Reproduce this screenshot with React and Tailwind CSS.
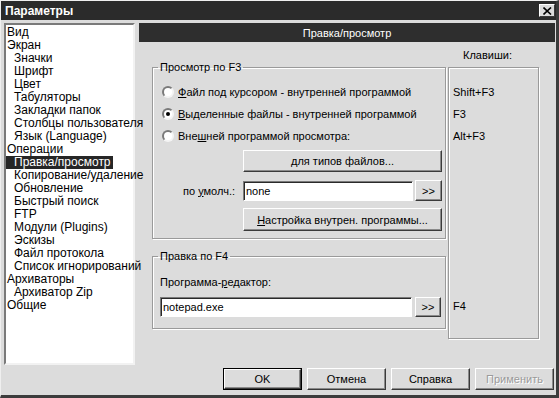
import React from "react";

const items = [
  ["Вид", 0], ["Экран", 0], ["Значки", 1], ["Шрифт", 1], ["Цвет", 1], ["Табуляторы", 1],
  ["Закладки папок", 1], ["Столбцы пользователя", 1], ["Язык (Language)", 1], ["Операции", 0],
  ["Правка/просмотр", 1, true], ["Копирование/удаление", 1], ["Обновление", 1], ["Быстрый поиск", 1],
  ["FTP", 1], ["Модули (Plugins)", 1], ["Эскизы", 1], ["Файл протокола", 1],
  ["Список игнорирований", 1], ["Архиваторы", 0], ["Архиватор Zip", 1], ["Общие", 0],
];

function Radio({ checked }) {
  return (
    <span className="w-[12px] h-[12px] rounded-full bg-white border-2 border-t-[#7a7a7a] border-l-[#7a7a7a] border-r-[#f4f4f4] border-b-[#f4f4f4] flex items-center justify-center shrink-0">
      {checked && <span className="w-[4px] h-[4px] rounded-full bg-black" />}
    </span>
  );
}

function Btn({ children, className }) {
  return (
    <div className={"flex items-center justify-center bg-[#dcdcdc] border border-t-white border-l-white border-r-[#3a3a3a] border-b-[#3a3a3a] shadow-[inset_-1px_-1px_0_#8a8a8a] " + className}>
      {children}
    </div>
  );
}

function Input({ children, className }) {
  return (
    <div className={"flex items-center bg-white border border-t-[#7a7a7a] border-l-[#7a7a7a] border-r-white border-b-white shadow-[inset_1px_1px_0_#2a2a2a] pl-[2px] " + className}>
      {children}
    </div>
  );
}

export default function App() {
  return (
    <div className="w-[559px] h-[398px] bg-[#dcdcdc] border-t border-l border-t-[#efefef] border-l-[#efefef] border-r-[3px] border-b-[3px] border-r-[#3c3c3c] border-b-[#3c3c3c] flex flex-col font-['Liberation_Sans',Arial,sans-serif] text-[11px] text-black leading-[14px] overflow-hidden">
      {/* title bar */}
      <div className="h-[19px] bg-[#2b2b2b] flex items-center justify-between pl-[4px] pr-[1px] shrink-0">
        <span className="text-white font-bold text-[12px]">Параметры</span>
        <div className="w-[16px] h-[13px] bg-[#dcdcdc] border border-t-white border-l-white border-r-[#3a3a3a] border-b-[#3a3a3a] flex items-center justify-center">
          <svg width="9" height="8" viewBox="0 0 9 8">
            <path d="M0.5 0.5 L8 7.5 M8 0.5 L0.5 7.5" stroke="#000" strokeWidth="1.6" />
          </svg>
        </div>
      </div>

      {/* body */}
      <div className="flex mt-[3px] pl-[3px] pr-[1px] h-[342px] shrink-0">
        {/* tree */}
        <div className="w-[131px] h-[342px] bg-white border-2 border-t-[#7a7a7a] border-l-[#7a7a7a] border-r-[#f2f2f2] border-b-[#f2f2f2] pt-[1px] shrink-0 text-[12px]">
          {items.map(([t, ind, sel]) => (
            <div key={t} className="h-[13px] leading-[13px] whitespace-nowrap">
              <span className={(sel ? "bg-[#262626] text-white " : "") + (ind ? "pl-[8px] " : "pl-[1px] ") + "pr-[2px] inline-block h-[13px]"}>{t}</span>
            </div>
          ))}
        </div>

        {/* right panel */}
        <div className="ml-[4px] flex-1 flex flex-col">
          <div className="h-[19px] bg-[#2e2e2e] text-white flex items-center justify-center shrink-0">Правка/просмотр</div>
          <div className="flex pl-[13px]">
            {/* groups */}
            <div className="w-[294px] flex flex-col shrink-0">
              <fieldset className="mt-[18px] h-[179px] border border-[#9a9a9a] shadow-[1px_1px_0_#fff,inset_1px_1px_0_#fff] m-0 p-0 min-w-0">
                <legend className="ml-[5px] px-[2px] leading-[14px]">Просмотр по F3</legend>
                <div className="pt-[7px] flex flex-col">
                  <div className="h-[22px] flex items-center pl-[9px] gap-[4px]">
                    <Radio />
                    <span><u>Ф</u>айл под курсором - внутренней программой</span>
                  </div>
                  <div className="h-[22px] flex items-center pl-[9px] gap-[4px]">
                    <Radio checked />
                    <span><u>В</u>ыделенные файлы - внутренней программой</span>
                  </div>
                  <div className="h-[22px] flex items-center pl-[9px] gap-[4px]">
                    <Radio />
                    <span>Вне<u>ш</u>ней программой просмотра:</span>
                  </div>
                  <Btn className="mt-[3px] ml-[90px] w-[199px] h-[22px]">для типов файлов...</Btn>
                  <div className="mt-[8px] h-[21px] flex items-center">
                    <span className="w-[82px] text-right">по <u>у</u>молч.:</span>
                    <Input className="ml-[8px] w-[170px] h-[20px]">none</Input>
                    <Btn className="ml-[2px] w-[27px] h-[21px]">&gt;&gt;</Btn>
                  </div>
                  <Btn className="mt-[7px] ml-[90px] w-[199px] h-[23px]"><span><u>Н</u>астройка внутрен. программы...</span></Btn>
                </div>
              </fieldset>

              <fieldset className="mt-[10px] h-[80px] border border-[#9a9a9a] shadow-[1px_1px_0_#fff,inset_1px_1px_0_#fff] m-0 p-0 min-w-0">
                <legend className="ml-[5px] px-[2px] leading-[14px]">Правка по F4</legend>
                <div className="flex flex-col">
                  <div className="mt-[12px] pl-[7px] h-[14px]">Программа-<u>р</u>едактор:</div>
                  <div className="mt-[8px] flex items-center pl-[7px]">
                    <Input className="w-[252px] h-[20px]">notepad.exe</Input>
                    <Btn className="ml-[3px] w-[26px] h-[20px]">&gt;&gt;</Btn>
                  </div>
                </div>
              </fieldset>
            </div>

            {/* keys */}
            <div className="ml-[2px] w-[91px] flex flex-col shrink-0">
              <div className="mt-[6px] pl-[15px] h-[14px]">Клавиши:</div>
              <div className="mt-[5px] h-[272px] border border-[#9a9a9a] shadow-[1px_1px_0_#fff,inset_1px_1px_0_#fff] pt-[13px] pl-[4px] flex flex-col">
                <div className="h-[22px] flex items-center">Shift+F3</div>
                <div className="h-[22px] flex items-center">F3</div>
                <div className="h-[22px] flex items-center">Alt+F3</div>
                <div className="mt-[148px] h-[22px] flex items-center">F4</div>
              </div>
            </div>
          </div>
        </div>
      </div>

      {/* bottom buttons */}
      <div className="mt-[3px] flex justify-end gap-[5px] pr-[2px]">
        <div className="w-[79px] h-[22px] border border-black">
          <Btn className="w-full h-full">OK</Btn>
        </div>
        <Btn className="w-[79px] h-[22px]">Отмена</Btn>
        <Btn className="w-[79px] h-[22px]">Справка</Btn>
        <Btn className="w-[79px] h-[22px] text-[#9a9a9a] [text-shadow:1px_1px_0_#fff]">Применить</Btn>
      </div>
    </div>
  );
}
